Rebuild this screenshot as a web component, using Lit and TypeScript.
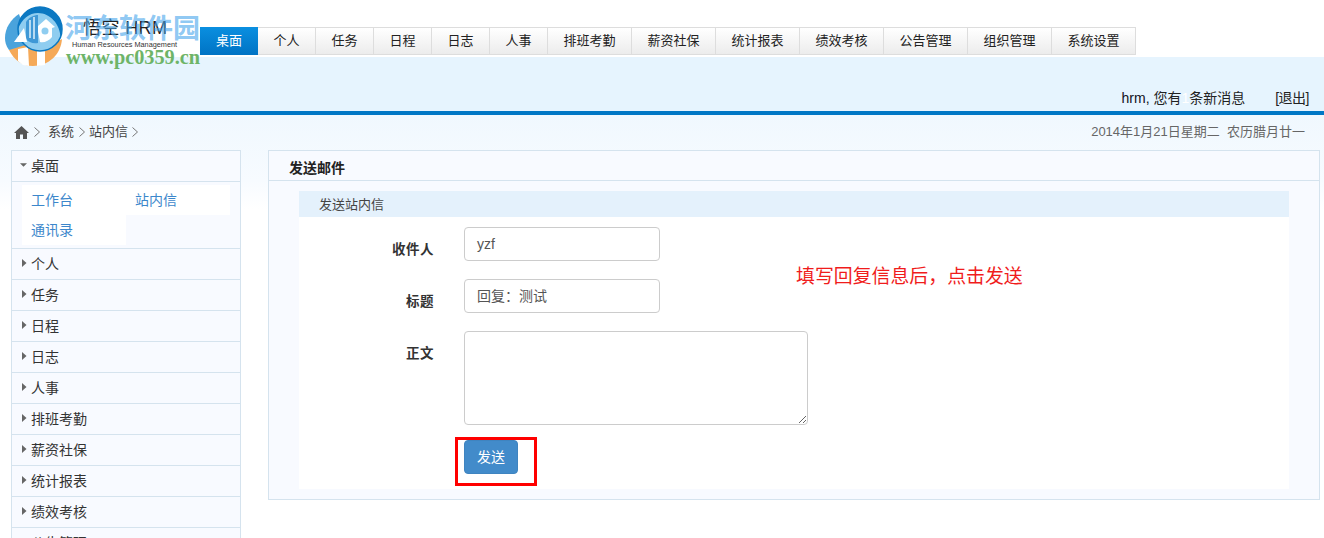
import { LitElement, html, css, svg } from "lit";
import { customElement } from "lit/decorators.js";

const tabs = ["桌面","个人","任务","日程","日志","人事","排班考勤","薪资社保","统计报表","绩效考核","公告管理","组织管理","系统设置"];
const side = ["个人","任务","日程","日志","人事","排班考勤","薪资社保","统计报表","绩效考核","公告管理"];

@customElement("app-root")
export class AppRoot extends LitElement {
  static styles = css`
    :host { display: block; width: 1324px; height: 538px; overflow: hidden; position: relative; background: #fff; font-family: "Liberation Sans", "Noto Sans CJK SC", sans-serif; color: #333; }
    .top { height: 57px; display: flex; background: #fff; }
    .logo { width: 200px; height: 72px; position: relative; flex: none; z-index: 2; }
    .logo svg { position: absolute; left: 0; top: 0; }
    .brand { position: absolute; left: 83px; top: 14px; font-size: 18px; color: #222; white-space: nowrap; line-height: 28px; letter-spacing: .4px; }
    .sub { position: absolute; left: 72px; top: 40px; font-size: 7.3px; color: #333; white-space: nowrap; line-height: 9px; }
    .wm { position: absolute; left: 65px; top: 14px; font-size: 27px; line-height: 30px; font-weight: 700; color: rgba(70,165,235,.62); white-space: nowrap; }
    .url { position: absolute; left: 66px; top: 47px; font: 700 20.3px/20px "Liberation Serif", serif; color: #6eb468; white-space: nowrap; }
    nav { display: flex; margin-top: 27px; height: 28px; }
    .tab { width: 58px; box-sizing: border-box; border: 1px solid #ddd; border-left: 0; background: linear-gradient(#fff, #ececec); font-size: 13px; line-height: 26px; text-align: center; color: #222; }
    .tab.wide { width: 84px; }
    .tab.on { background: linear-gradient(#0a8fe0, #0073c4); border: 0; color: #fff; line-height: 28px; }
    .band { height: 54px; background: #e6f4fe; display: flex; justify-content: flex-end; align-items: flex-end; padding-right: 15px; font-size: 14px; line-height: 26px; color: #222; }
    .band b { font-weight: 400; color: #112; }
    .band .one { color: #fff; }
    .band .out { margin-left: 30px; letter-spacing: -.5px; }
    .rule { height: 4px; background: #0077c5; }
    .crumbs { height: 94px; box-sizing: border-box; background: linear-gradient(#f0f8fe, #f7fbff 70%, #fff); padding: 0 19px 0 14px; display: flex; justify-content: space-between; align-items: flex-start; font-size: 13px; line-height: 34px; color: #444; }
    .path { display: flex; align-items: center; height: 34px; }
    .path svg { display: block; }
    .c1 { margin-left: 4px; margin-right: 7px; }
    .c2 { margin-left: 4px; margin-right: 3px; }
    .c3 { margin-left: 3px; }
    .date { color: #666; font-size: 13px; }
    .body { position: absolute; left: 11px; top: 150px; width: 1309px; display: flex; gap: 27px; align-items: flex-start; }
    aside { width: 230px; box-sizing: border-box; border: 1px solid #d5e3ee; border-bottom: 0; background: #f8faff; flex: none; }
    .row { height: 31px; box-sizing: border-box; border-bottom: 1px solid #d5e3ee; display: flex; align-items: center; padding: 0 0 2px 8px; font-size: 14px; color: #333; gap: 4px; }
    .tri { width: 7px; display: flex; justify-content: center; }
    .tri svg { display: block; }
    .subs { height: 67px; box-sizing: border-box; border-bottom: 1px solid #d5e3ee; padding: 3px 10px 0 10px; display: grid; grid-template-columns: 104px 104px; grid-auto-rows: 30px; align-content: start; }
    .subs div { background: #fff; color: #3c87cb; font-size: 14px; line-height: 30px; padding-left: 9px; }
    main { flex: 1; height: 350px; box-sizing: border-box; border: 1px solid #d5e3ee; background: #f8faff; display: flex; flex-direction: column; }
    .title { height: 30px; box-sizing: border-box; border-bottom: 1px solid #d5e3ee; font-size: 14px; font-weight: 700; color: #222; padding-left: 20px; line-height: 34px; }
    .card { margin: 10px 30px 0 30px; height: 298px; background: #fff; }
    .cardhead { height: 26px; background: #e4f1fc; font-size: 13px; line-height: 27px; padding-left: 20px; color: #444; }
    .form { display: grid; grid-template-columns: 135px 1fr; column-gap: 30px; padding-top: 10px; }
    label { font-size: 13.5px; font-weight: 700; color: #333; text-align: right; letter-spacing: .5px; }
    .l1, .l2, .l3 { padding-top: 11px; }
    .inp { width: 196px; height: 34px; box-sizing: border-box; border: 1px solid #ccc; border-radius: 4px; font-size: 14px; line-height: 32px; padding-left: 12px; color: #555; background: #fff; }
    .mb { margin-bottom: 18px; }
    .ta { position: relative; width: 344px; height: 94px; box-sizing: border-box; border: 1px solid #ccc; border-radius: 4px; margin-bottom: 15px; background: #fff; }
    .ta svg { position: absolute; right: 0; bottom: 0; }
    .btn { width: 54px; height: 34px; box-sizing: border-box; border: 1px solid #3f84c0; border-radius: 4px; background: #428bca; color: #fff; font-size: 14px; line-height: 32px; text-align: center; }
    .redbox { position: absolute; left: 455px; top: 437px; width: 82px; height: 49px; box-sizing: border-box; border: 3px solid #f00; }
    .note { position: absolute; left: 796px; top: 263px; font-size: 18.9px; line-height: 28px; color: #f01c1c; white-space: nowrap; }
  `;

  private chev(cls: string) {
    return html`<svg class=${cls} width="8" height="12" viewBox="0 0 8 12"><path d="M1.5 1.5 6.500 6 1.5 10.500" fill="none" stroke="#777" stroke-width="1"/></svg>`;
  }

  private tri(open: boolean) {
    return open
      ? html`<span class="tri"><svg width="8" height="6" viewBox="0 0 8 6"><path d="M0 1h8L4 5z" fill="#666"/></svg></span>`
      : html`<span class="tri"><svg width="6" height="10" viewBox="0 0 6 10"><path d="M1 1v8l4.500-4z" fill="#666"/></svg></span>`;
  }

  render() {
    return html`
      <div class="top">
        <div class="logo">
          <svg width="70" height="70" viewBox="0 0 70 70">
            ${svg`
              <path d="M9 50C16 44 26 42 36 42c10 0 20 1 26-3-1 15-13 27-29 27C22 66 14 60 9 50z" fill="#f5a958"/>
              <path d="M18 49l10-2 1 19-6-1-5-4zM37 45h8v20l-8 1z" fill="#fff"/>
              <path d="M5 38c0-10 6-19 14-24l10 30-20 6c-3-4-4-8-4-12z" fill="#4aa3dc"/>
              <circle cx="40" cy="29" r="22" fill="#8fcdf0"/>
              <path d="M18 29a22 22 0 0 1 44 0c0 3-.5 6-1.500 8C60 24 50 13 38 13c-9 0-16 6-20 16z" fill="#0b78c2"/>
              <circle cx="40" cy="29" r="22" fill="none" stroke="#0b78c2" stroke-width="1.500"/>
              <path d="M26 22c3-5 8-7 12-7v28c-5 1-10-1-12-4z" fill="#3f98d6"/>
              <path d="M38 26l8-7 9 8-3 1v9c-3 4-8 6-12 5l-2-10z" fill="#fff"/>
              <path d="M14 42l10-14 3 14z" fill="#fff"/>
              <path d="M30 20v18M34 17v22" stroke="#dff1fb" stroke-width="1.500"/>
              <circle cx="45" cy="31" r="3.500" fill="#8fcdf0"/>
            `}
          </svg>
          <div class="brand">悟空 HRM</div>
          <div class="sub">Human Resources Management</div>
          <div class="wm">河东软件园</div>
          <div class="url">www.pc0359.cn</div>
        </div>
        <nav>
          ${tabs.map((t, i) => html`<div class="tab ${t.length > 2 ? "wide" : ""} ${i === 0 ? "on" : ""}">${t}</div>`)}
        </nav>
      </div>
      <div class="band"><b>hrm,</b>&nbsp;您有<span class="one">1</span>条新消息<span class="out">[退出]</span></div>
      <div class="rule"></div>
      <div class="crumbs">
        <div class="path">
          <svg width="15" height="13" viewBox="0 0 15 13"><path d="M7.500 0 15 7h-2v6H9V8.500H6V13H2V7H0z" fill="#555"/></svg>
          ${this.chev("c1")}<span>系统</span>${this.chev("c2")}<span>站内信</span>${this.chev("c3")}
        </div>
        <div class="date">2014年1月21日星期二&nbsp;&nbsp;农历腊月廿一</div>
      </div>
      <div class="body">
        <aside>
          <div class="row">${this.tri(true)}桌面</div>
          <div class="subs"><div>工作台</div><div>站内信</div><div>通讯录</div></div>
          ${side.map((s) => html`<div class="row">${this.tri(false)}${s}</div>`)}
        </aside>
        <main>
          <div class="title">发送邮件</div>
          <div class="card">
            <div class="cardhead">发送站内信</div>
            <div class="form">
              <label class="l1">收件人</label><div class="inp mb">yzf</div>
              <label class="l2">标题</label><div class="inp mb">回复：测试</div>
              <label class="l3">正文</label>
              <div class="ta"><svg width="10" height="10" viewBox="0 0 10 10"><path d="M2 9 9 2M6 9 9 6" stroke="#666" stroke-width="1"/></svg></div>
              <span></span><div class="btn">发送</div>
            </div>
          </div>
        </main>
      </div>
      <div class="note">填写回复信息后，点击发送</div>
      <div class="redbox"></div>
    `;
  }
}
